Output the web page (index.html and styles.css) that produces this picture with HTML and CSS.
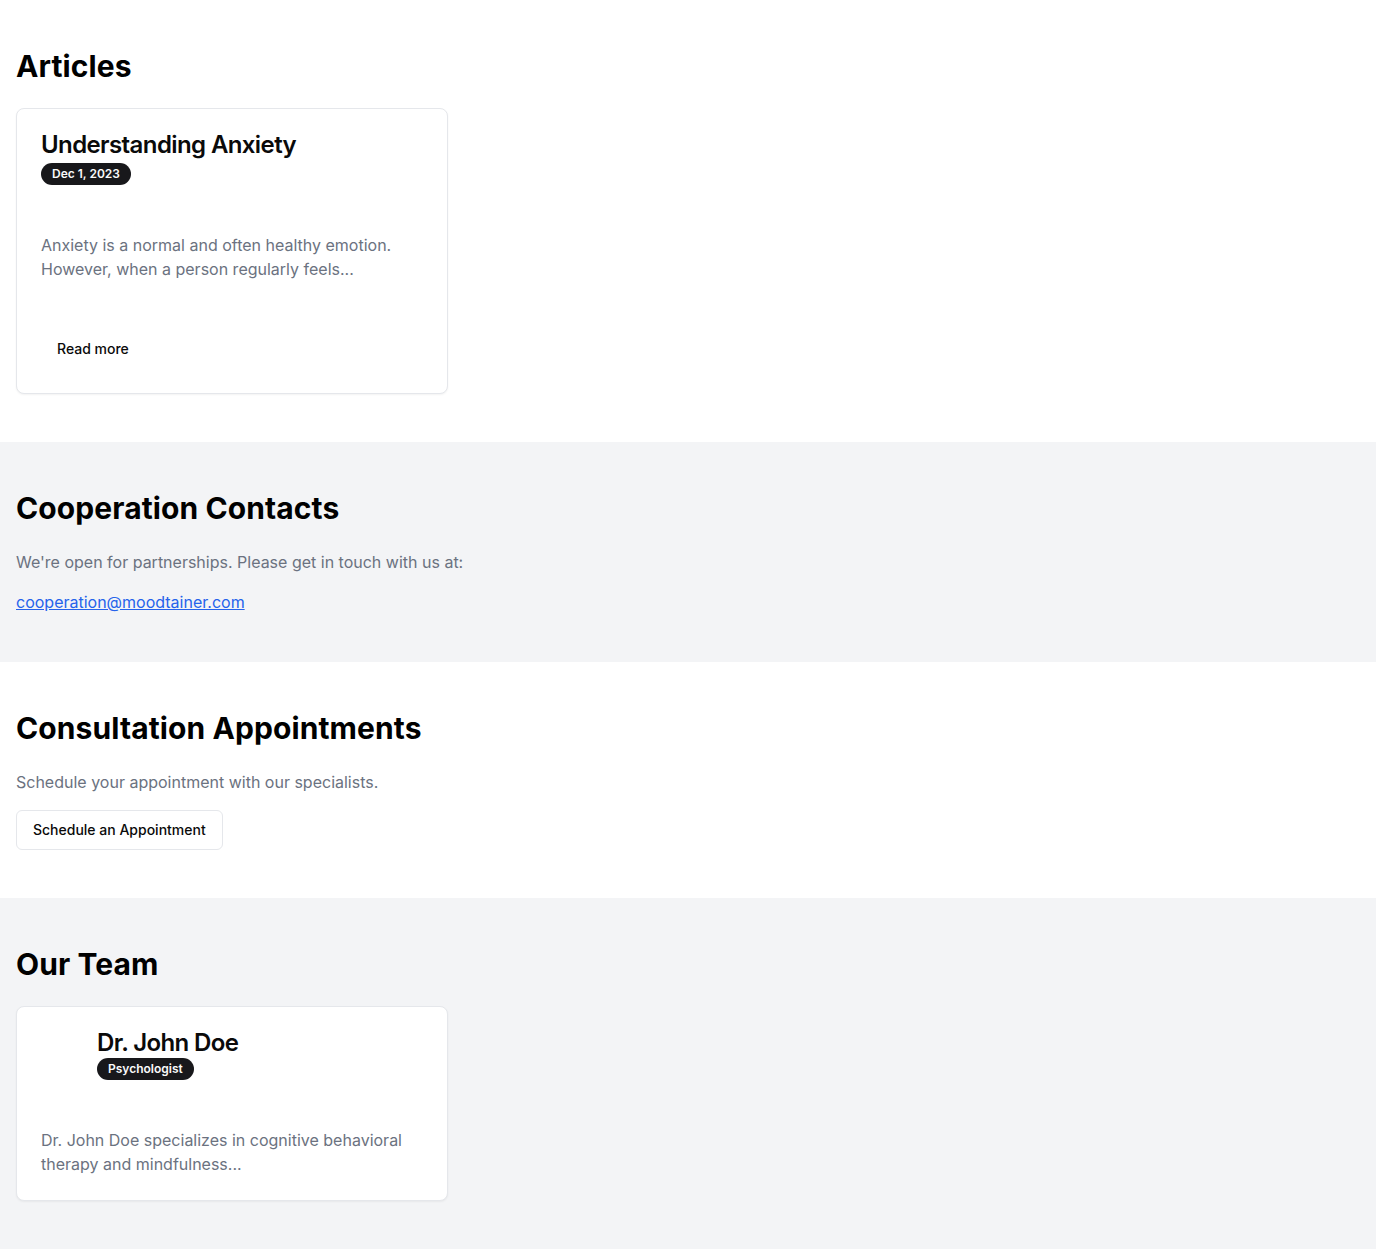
FILE: index.html
```html
<!DOCTYPE html>
<html lang="en">
<head>
<meta charset="utf-8">
<title>Moodtainer</title>
<link rel="stylesheet" href="styles.css">
</head>
<body>
<section class="section">
  <h2 class="section-title">Articles</h2>
  <div class="grid">
    <div class="card">
      <div class="card-header">
        <h3 class="card-title">Understanding Anxiety</h3>
        <span class="badge">Dec 1, 2023</span>
      </div>
      <div class="card-content">
        <p class="muted">Anxiety is a normal and often healthy emotion. However, when a person regularly feels...</p>
      </div>
      <div class="card-footer">
        <button class="btn btn-ghost">Read more</button>
      </div>
    </div>
  </div>
</section>

<section class="section section-alt">
  <h2 class="section-title">Cooperation Contacts</h2>
  <p class="muted lead">We're open for partnerships. Please get in touch with us at:</p>
  <a class="link" href="#">cooperation@moodtainer.com</a>
</section>

<section class="section">
  <h2 class="section-title">Consultation Appointments</h2>
  <p class="muted lead">Schedule your appointment with our specialists.</p>
  <button class="btn btn-outline">Schedule an Appointment</button>
</section>

<section class="section section-alt">
  <h2 class="section-title">Our Team</h2>
  <div class="grid">
    <div class="card">
      <div class="card-header team-header">
        <div class="avatar"></div>
        <div class="team-info">
          <h3 class="card-title">Dr. John Doe</h3>
          <span class="badge">Psychologist</span>
        </div>
      </div>
      <div class="card-content">
        <p class="muted">Dr. John Doe specializes in cognitive behavioral therapy and mindfulness...</p>
      </div>
    </div>
  </div>
</section>
</body>
</html>
```

FILE: styles.css
```css
* { box-sizing: border-box; }
html, body { margin: 0; padding: 0; }
body {
  font-family: Inter, "Noto Sans", sans-serif;
  color: #0a0a0a;
  background: #fff;
  -webkit-font-smoothing: antialiased;
}
h2, h3, p { margin: 0; }

.section {
  padding: 48px 16px;
  background: #fff;
}
.section-alt { background: #f3f4f6; }

.section-title {
  font-size: 30px;
  line-height: 36px;
  font-weight: 700;
  letter-spacing: 0.1px;
  color: #000;
  margin-bottom: 24px;
}

.grid {
  display: grid;
  grid-template-columns: repeat(3, 1fr);
  gap: 24px;
}

.card {
  background: #fff;
  border: 1px solid #e5e7eb;
  border-radius: 8px;
  box-shadow: 0 1px 2px rgba(0,0,0,0.05);
  display: flex;
  flex-direction: column;
}
.card-header {
  padding: 24px;
  display: flex;
  flex-direction: column;
  align-items: flex-start;
  gap: 6px;
}
.card-title {
  font-size: 24px;
  line-height: 24px;
  font-weight: 600;
  letter-spacing: -0.6px;
  color: #0a0a0a;
}
.badge {
  display: inline-flex;
  align-items: center;
  border-radius: 9999px;
  border: 1px solid transparent;
  background: #18181b;
  color: #fafafa;
  font-size: 12px;
  line-height: 16px;
  font-weight: 600;
  padding: 2px 10px;
}
.card-content { padding: 24px; }
.card-footer {
  padding: 24px;
  display: flex;
  align-items: center;
}

.muted {
  color: #6b7280;
  font-size: 16px;
  line-height: 24px;
}

.team-header {
  flex-direction: row;
  align-items: flex-start;
  gap: 16px;
}
.avatar {
  width: 40px;
  height: 40px;
  flex: none;
}
.team-info {
  display: flex;
  flex-direction: column;
  align-items: flex-start;
  gap: 3px;
}

.btn {
  font-family: inherit;
  font-size: 14px;
  line-height: 20px;
  font-weight: 500;
  height: 40px;
  padding: 8px 16px;
  border-radius: 6px;
  cursor: pointer;
  color: #0a0a0a;
  display: inline-flex;
  align-items: center;
}
.btn-ghost {
  background: transparent;
  border: none;
}
.btn-outline {
  background: #fff;
  border: 1px solid #e5e7eb;
}

.lead { margin-bottom: 16px; }
.link {
  color: #2563eb;
  text-decoration: underline;
  font-size: 16px;
  line-height: 24px;
  display: inline-block;
}
```
